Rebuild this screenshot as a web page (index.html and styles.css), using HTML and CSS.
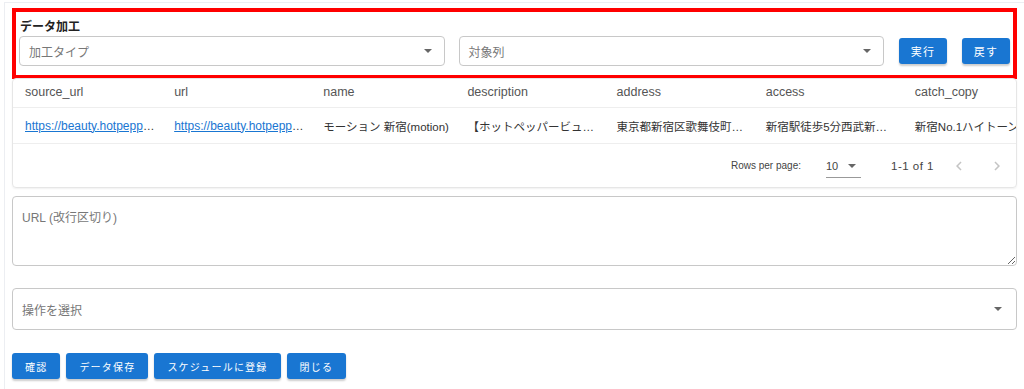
FILE: index.html
```html
<!DOCTYPE html>
<html lang="ja">
<head>
    <meta charset="UTF-8">
    <meta name="viewport" content="width=device-width, initial-scale=1.0">
    <title>データ加工</title>
    <link rel="stylesheet" href="styles.css">
</head>
<body>

<div class="page">

    <div class="process-box">
        <div class="process-title">データ加工</div>
        <div class="process-row">
            <div class="select-field">
                <span class="placeholder">加工タイプ</span>
                <span class="caret"></span>
            </div>
            <div class="select-field">
                <span class="placeholder">対象列</span>
                <span class="caret"></span>
            </div>
            <button class="btn btn-small">実行</button>
            <button class="btn btn-small">戻す</button>
        </div>
    </div>

    <div class="table-card">
        <div class="table-wrap">
            <table class="data-table">
                <colgroup>
                    <col class="c-wide"><col class="c-wide"><col class="c-name">
                    <col class="c-wide"><col class="c-wide"><col class="c-wide"><col class="c-wide">
                </colgroup>
                <thead>
                    <tr>
                        <th>source_url</th>
                        <th>url</th>
                        <th>name</th>
                        <th>description</th>
                        <th>address</th>
                        <th>access</th>
                        <th>catch_copy</th>
                    </tr>
                </thead>
                <tbody>
                    <tr>
                        <td><a href="#">https://beauty.hotpepper.jp/slnH000123456/</a></td>
                        <td><a href="#">https://beauty.hotpepper.jp/slnH000123456/</a></td>
                        <td>モーション 新宿(motion)</td>
                        <td>【ホットペッパービューティー】モーション 新宿</td>
                        <td>東京都新宿区歌舞伎町１丁目</td>
                        <td>新宿駅徒歩5分西武新宿駅徒歩1分</td>
                        <td>新宿No.1ハイトーン特化サロン</td>
                    </tr>
                </tbody>
            </table>
        </div>
        <div class="table-footer">
            <span class="rows-label">Rows per page:</span>
            <span class="rows-select">10<span class="caret"></span></span>
            <span class="page-count">1-1 of 1</span>
            <span class="pager">
                <svg viewBox="0 0 24 24"><path d="M15.4 7.4 14 6l-6 6 6 6 1.4-1.4L10.8 12z" fill="#c4c4c4"/></svg>
                <svg viewBox="0 0 24 24"><path d="M10 6 8.6 7.4 13.2 12l-4.6 4.6L10 18l6-6z" fill="#c4c4c4"/></svg>
            </span>
        </div>
    </div>

    <textarea class="url-input" placeholder="URL (改行区切り)"></textarea>

    <div class="select-field select-large">
        <span class="placeholder">操作を選択</span>
        <span class="caret"></span>
    </div>

    <div class="actions">
        <button class="btn">確認</button>
        <button class="btn">データ保存</button>
        <button class="btn">スケジュールに登録</button>
        <button class="btn">閉じる</button>
    </div>

</div>

</body>
</html>
```

FILE: styles.css
```css
body {
    margin: 0;
    background: #fff;
    font-family: "Liberation Sans", "Noto Sans CJK JP", sans-serif;
    color: #333;
    height: 389px;
    overflow: hidden;
}
.page {
    box-sizing: border-box;
    height: 387px;
    margin: 2px 0 0 4px;
    padding: 5px 7px 0 7px;
    border-left: 1px solid #eceef2;
    border-top: 1px solid #eceef2;
}

/* data processing panel (marked in red) */
.process-box {
    border: 4px solid #f00;
    padding: 7px 3px 9px 3px;
}
.process-title {
    font-size: 12px;
    font-weight: bold;
    color: #222;
    padding-left: 1px;
    line-height: 17px;
}
.process-row {
    display: flex;
    align-items: center;
    gap: 14px;
}
.process-row .select-field {
    flex: 1;
    height: 30px;
}
.process-row .btn-small {
    margin-left: 1px;
}

.select-field {
    display: flex;
    align-items: center;
    justify-content: space-between;
    box-sizing: border-box;
    border: 1px solid #c8c8c8;
    border-radius: 4px;
    padding: 0 10px 0 9px;
    background: #fff;
}
.placeholder {
    font-size: 12px;
    color: #777;
}
.caret {
    display: inline-block;
    width: 0;
    height: 0;
    border-left: 4px solid transparent;
    border-right: 4px solid transparent;
    border-top: 4px solid #666;
    margin-right: 2px;
}

.btn {
    background: #1976d2;
    color: #fff;
    border: none;
    border-radius: 3px;
    height: 26px;
    padding: 0 13px;
    font-family: "Noto Sans CJK JP", sans-serif;
    font-size: 10px;
    letter-spacing: 1.2px;
    box-shadow: 0 2px 2px rgba(0, 0, 0, 0.2);
}
.btn-small {
    width: 48px;
    padding: 0;
    font-size: 11px;
}

/* table */
.table-card {
    margin-top: -1px;
    border: 1px solid #e6e6e6;
    border-radius: 4px;
    box-shadow: 0 1px 2px rgba(0, 0, 0, 0.06);
}
.table-wrap {
    overflow: hidden;
}
.data-table {
    border-collapse: collapse;
    table-layout: fixed;
    width: 1039px;
}
.c-wide {
    width: 149px;
}
.c-name {
    width: 144px;
}
.data-table th {
    text-align: left;
    font-weight: normal;
    font-size: 12.5px;
    color: #555;
    height: 25px;
    padding: 0 6px 3px 12px;
    border-bottom: 1px solid #eee;
}
.data-table td {
    height: 35px;
    padding: 0 6px 0 12px;
    border-bottom: 1px solid #eee;
    white-space: nowrap;
    overflow: hidden;
    text-overflow: ellipsis;
    font-size: 11.5px;
    color: #333;
}
.data-table td a {
    color: #1976d2;
    font-size: 12px;
}
.table-footer {
    display: flex;
    align-items: center;
    justify-content: flex-end;
    height: 43px;
    font-size: 10px;
    color: #444;
    padding-right: 10px;
}
.rows-select {
    display: inline-flex;
    align-items: center;
    gap: 10px;
    margin-left: 25px;
    width: 35px;
    height: 24px;
    border-bottom: 1px solid #999;
    font-size: 11px;
    box-sizing: border-box;
    padding-top: 2px;
}
.page-count {
    margin-left: 30px;
    font-size: 11.5px;
    letter-spacing: 0.5px;
}
.pager {
    display: flex;
    gap: 20px;
    margin-left: 16px;
}
.pager svg {
    width: 18px;
    height: 18px;
}

/* url textarea */
.url-input {
    display: block;
    box-sizing: border-box;
    width: 100%;
    height: 70px;
    margin-top: 8px;
    border: 1px solid #c8c8c8;
    border-radius: 4px;
    padding: 11px 9px;
    font-family: "Liberation Sans", "Noto Sans CJK JP", sans-serif;
    font-size: 12px;
}
.url-input::placeholder {
    color: #777;
}

.select-large {
    margin-top: 22px;
    height: 42px;
    padding-right: 12px;
}

.actions {
    display: flex;
    gap: 6px;
    margin-top: 23px;
}
```
